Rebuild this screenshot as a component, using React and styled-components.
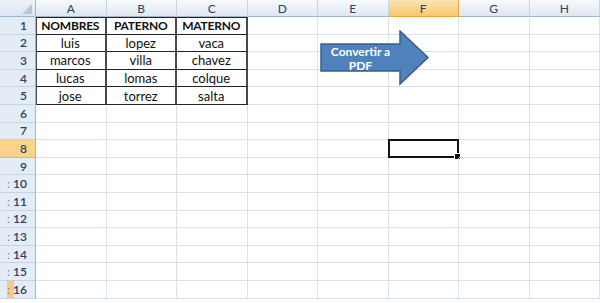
import styled, { createGlobalStyle, css } from 'styled-components'

const GlobalStyle = createGlobalStyle`
    html, body {
        margin: 0;
        padding: 0;
        background: #fff;
        overflow: hidden;
    }
    body {
        font-family: Lato, "Liberation Sans", sans-serif;
    }
`

const COLS = ['A', 'B', 'C', 'D', 'E', 'F', 'G', 'H']
const ROWS = 16
const ACTIVE_COL = 'F'
const ACTIVE_ROW = 8

const data = [
    ['NOMBRES', 'PATERNO', 'MATERNO'],
    ['luis', 'lopez', 'vaca'],
    ['marcos', 'villa', 'chavez'],
    ['lucas', 'lomas', 'colque'],
    ['jose', 'torrez', 'salta'],
]

const App = () => {
    const rows = Array.from({ length: ROWS }, (_, i) => i + 1)
    return (
        <>
            <GlobalStyle />
            <Sheet>
                <Corner>
                    <CornerMark />
                </Corner>
                {COLS.map(c => (
                    <ColHeader key={c} $active={c === ACTIVE_COL}>{c}</ColHeader>
                ))}
                {rows.map(r => (
                    <Row key={r} r={r} />
                ))}
                <ArrowShape>
                    <svg width="112" height="58" viewBox="0 0 112 58">
                        <path
                            d="M1 14 H80 V1 L108 27.5 L80 54 V41 H1 Z"
                            fill="#4f81bd"
                            stroke="#385d8a"
                            strokeWidth="1.5"
                        />
                    </svg>
                    <ArrowLabel>Convertir a<br />PDF</ArrowLabel>
                </ArrowShape>
            </Sheet>
        </>
    )
}

const Row = ({ r }) => {
    const values = data[r - 1]
    return (
        <>
            <RowHeader $active={r === ACTIVE_ROW} $mark={r === ROWS}>
                {r >= 10 && <Dots>:</Dots>}
                {r}
            </RowHeader>
            {COLS.map((c, i) => {
                const inTable = values && i < 3
                const active = c === ACTIVE_COL && r === ACTIVE_ROW
                return (
                    <Cell
                        key={c}
                        $table={inTable}
                        $first={inTable && i === 0}
                        $top={inTable && r === 1}
                        $bold={r === 1}
                        $active={active}
                    >
                        {inTable ? values[i] : ''}
                        {active && <FillHandle />}
                    </Cell>
                )
            })}
        </>
    )
}

export default App

const Sheet = styled.div`
    position: relative;
    display: grid;
    grid-template-columns: 36px repeat(8, 70.5px);
    grid-template-rows: 17px repeat(16, 17.6px);
    width: 600px;
    height: 303px;
    overflow: hidden;
`

const Corner = styled.div`
    display: flex;
    align-items: flex-end;
    justify-content: flex-end;
    padding: 0 3px 2px 0;
    background: linear-gradient(#eef3fa, #dbe5f2);
    border-right: 1px solid #9eb6ce;
    border-bottom: 1px solid #9eb6ce;
    box-sizing: border-box;
`

const CornerMark = styled.div`
    width: 0;
    height: 0;
    border-left: 10px solid transparent;
    border-bottom: 10px solid #b7c6da;
`

const ColHeader = styled.div`
    display: flex;
    align-items: center;
    justify-content: center;
    font-family: Lato, "Liberation Sans", sans-serif;
    font-size: 12px;
    color: #33415c;
    background: linear-gradient(#f7f9fd, #dfe7f2);
    border-right: 1px solid #c5d3e4;
    border-bottom: 1px solid #9eb6ce;
    box-sizing: border-box;
    ${p => p.$active && css`
        background: linear-gradient(#fbe3b3, #f7c86f);
        border-right-color: #e5a93c;
        border-bottom-color: #f2a93b;
    `}
`

const RowHeader = styled.div`
    position: relative;
    display: flex;
    align-items: center;
    justify-content: flex-end;
    padding-right: 8px;
    font-family: Lato, "Liberation Sans", sans-serif;
    font-size: 12px;
    font-weight: 600;
    color: #2f3e5b;
    background: #e4ecf7;
    border-right: 1px solid #9eb6ce;
    border-bottom: 1px solid #c5d3e4;
    box-sizing: border-box;
    ${p => p.$active && css`
        background: #fbd38a;
        border-bottom-color: #f2b14f;
        border-right-color: #f2a93b;
    `}
    ${p => p.$mark && css`
        &::before {
            content: '';
            position: absolute;
            left: 7px;
            top: 0;
            bottom: 0;
            width: 7px;
            background: #fbc983;
        }
    `}
`

const Dots = styled.span`
    position: relative;
    font-weight: 400;
    color: #7d8796;
    margin-right: 3px;
`

const Cell = styled.div`
    position: relative;
    display: flex;
    align-items: center;
    justify-content: center;
    font-family: Lato, "Liberation Sans", sans-serif;
    font-size: 13px;
    color: #111;
    border-right: 1px solid #dae0ea;
    border-bottom: 1px solid #dae0ea;
    box-sizing: border-box;
    ${p => p.$bold && css`
        font-size: 12px;
        font-weight: 700;
        letter-spacing: -0.2px;
    `}
    ${p => p.$table && css`
        border-right: 2px solid #4a4a4a;
        border-bottom: 1px solid #222;
    `}
    ${p => p.$first && css`
        box-shadow: inset 1px 0 0 #4a4a4a;
    `}
    ${p => p.$top && css`
        border-top: 1px solid #222;
    `}
    ${p => p.$active && css`
        border: 2px solid #111;
        margin: -1px 0 0 -1px;
    `}
`

const FillHandle = styled.div`
    position: absolute;
    right: -4px;
    bottom: -4px;
    width: 5px;
    height: 5px;
    background: #111;
    border: 1px solid #fff;
`

const ArrowShape = styled.div`
    position: absolute;
    left: 320px;
    top: 30px;
    display: grid;
    width: 112px;
    height: 58px;
    & > * {
        grid-area: 1 / 1;
    }
    svg {
        display: block;
    }
`

const ArrowLabel = styled.div`
    width: 81px;
    padding-top: 15px;
    text-align: center;
    font-family: Lato, "Liberation Sans", sans-serif;
    font-size: 12px;
    font-weight: 700;
    line-height: 14px;
    color: #fff;
`
